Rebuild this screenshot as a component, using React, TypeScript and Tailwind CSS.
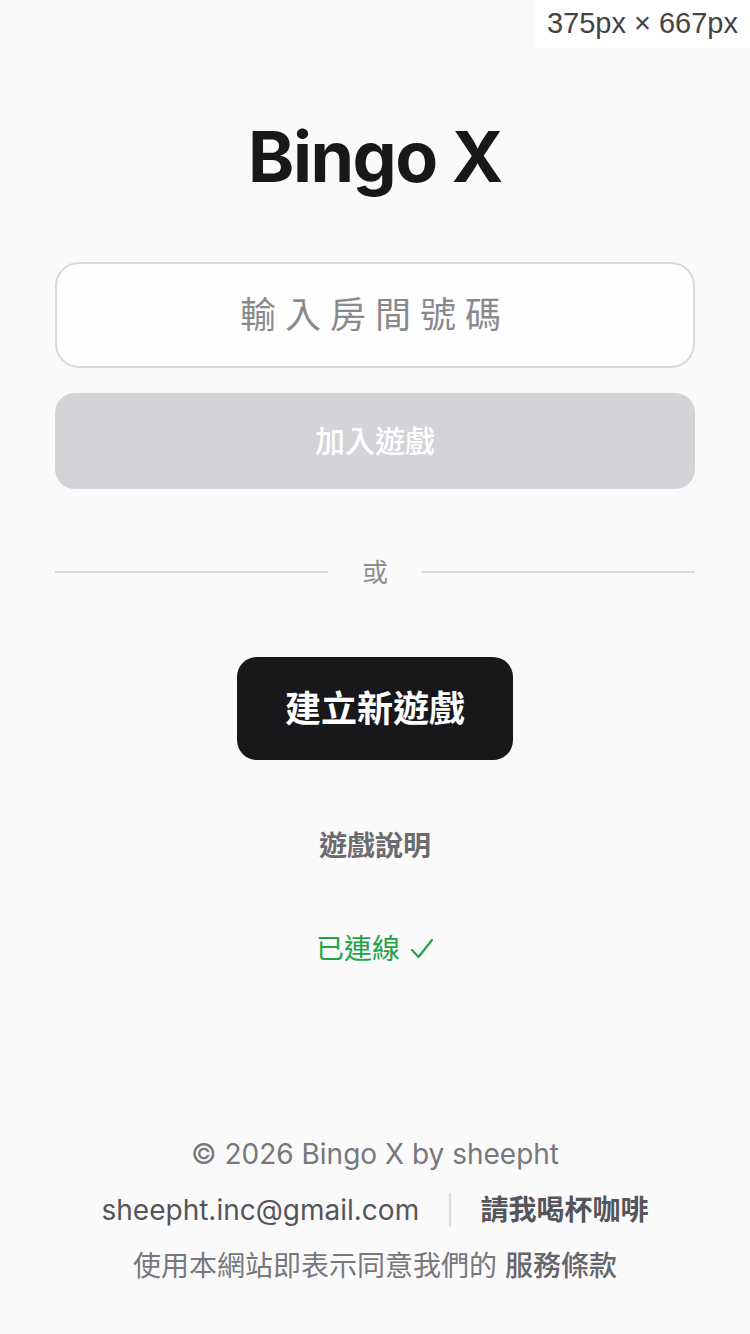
import React from 'react';

const font = "font-['Inter','Noto_Sans_CJK_TC',sans-serif]";

const App = () => {
  return (
    <div className={`relative min-h-screen flex flex-col bg-[#fafafa] text-[#18181b] ${font}`}>
      <div className="absolute top-0 right-0 bg-white px-3 h-[48px] flex items-center text-[29px] text-[#444] font-['Liberation_Sans',sans-serif]">
        375px × 667px
      </div>

      <main className="flex flex-col items-center px-[55px] pt-[122px]">
        <h1 className="text-[70px] leading-none font-bold tracking-[-1.5px]">Bingo X</h1>

        <input
          className="mt-[70px] w-full h-[106px] rounded-[24px] border-2 border-[#d9d9dc] bg-[#fefefe] text-center text-[36px] tracking-[9px] outline-none placeholder:text-[#8a8a8e]"
          placeholder="輸入房間號碼"
        />

        <button className="mt-[25px] w-full h-[96px] rounded-[20px] bg-[#d4d4d8] text-white text-[30px] font-medium">
          加入遊戲
        </button>

        <div className="mt-[63px] w-full h-[40px] flex items-center">
          <div className="flex-1 h-[2px] bg-[#d9d9dc]" />
          <span className="px-[34px] text-[26px] text-[#8e8e93]">或</span>
          <div className="flex-1 h-[2px] bg-[#d9d9dc]" />
        </div>

        <button className="mt-[65px] w-[276px] h-[103px] rounded-[20px] bg-[#18181b] text-white text-[36px] font-semibold">
          建立新遊戲
        </button>

        <button className="mt-[65px] h-[40px] text-[28px] font-semibold text-[#6b6b70]">遊戲說明</button>

        <div className="mt-[64px] h-[40px] flex items-center gap-[10px] text-[28px] text-[#22a447]">
          <span>已連線</span>
          <svg width="24" height="24" viewBox="0 0 24 24" fill="none" stroke="currentColor" strokeWidth="2.2" strokeLinecap="round" strokeLinejoin="round">
            <polyline points="2,13 8.5,20 22,3" />
          </svg>
        </div>
      </main>

      <footer className="mt-auto pb-[48px] flex flex-col items-center gap-[16px] text-[28px] leading-[40px] text-[#77777c]">
        <p>© 2026 Bingo X by sheepht</p>
        <p className="flex items-center text-[#55555b]">
          <span>sheepht.inc@gmail.com</span>
          <span className="mx-[26px] text-[#dcdcdf]">|</span>
          <span className="font-semibold">請我喝杯咖啡</span>
        </p>
        <p>
          使用本網站即表示同意我們的 <span className="font-medium text-[#66666b]">服務條款</span>
        </p>
      </footer>
    </div>
  );
};

export default App;
